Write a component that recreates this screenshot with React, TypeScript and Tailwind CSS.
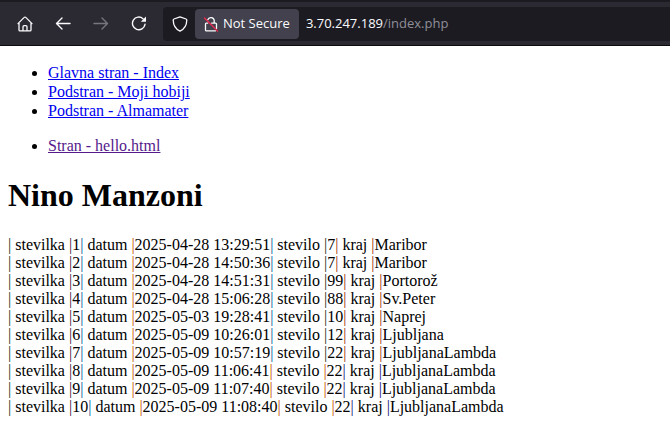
import React from "react";

type Reading = [id: number, date: string, count: number, place: string];

const readings: Reading[] = [
  [1, "2025-04-28 13:29:51", 7, "Maribor"],
  [2, "2025-04-28 14:50:36", 7, "Maribor"],
  [3, "2025-04-28 14:51:31", 99, "Portorož"],
  [4, "2025-04-28 15:06:28", 88, "Sv.Peter"],
  [5, "2025-05-03 19:28:41", 10, "Naprej"],
  [6, "2025-05-09 10:26:01", 12, "Ljubljana"],
  [7, "2025-05-09 10:57:19", 22, "LjubljanaLambda"],
  [8, "2025-05-09 11:06:41", 22, "LjubljanaLambda"],
  [9, "2025-05-09 11:07:40", 22, "LjubljanaLambda"],
  [10, "2025-05-09 11:08:40", 22, "LjubljanaLambda"],
];

function Toolbar() {
  return (
    <header className="flex h-[46px] items-center border-t-2 border-b border-t-[#1c1b22] border-b-[#0c0c0d] bg-[#2b2a33] font-['Open_Sans','Noto_Sans',sans-serif] text-[13px] text-[#fbfbfe]">
      <nav aria-label="Browser" className="flex shrink-0 gap-[22px] pr-4 pl-[17px]">
        <button aria-label="Home" className="size-4">
          <svg viewBox="0 0 16 16" className="size-4" fill="none" stroke="currentColor" strokeWidth="1.3" strokeLinejoin="round" strokeLinecap="round">
            <path d="M1 7.6 7.2 1.4a1.1 1.1 0 0 1 1.6 0L15 7.6M2 6.8v7.1c0 .6.4 1 1 1h10c.6 0 1-.4 1-1V6.8M6 14.7v-4c0-.7.4-1.1 1.1-1.1h1.8c.7 0 1.1.4 1.1 1.1v4" />
          </svg>
        </button>
        <button aria-label="Back" className="size-4">
          <svg viewBox="0 0 16 16" className="size-4" fill="none" stroke="currentColor" strokeWidth="1.4" strokeLinecap="round" strokeLinejoin="round">
            <path d="M15 7.500H2M7 2 1.500 7.500 7 13" />
          </svg>
        </button>
        <button aria-label="Forward" disabled className="size-4 text-[#77767e]">
          <svg viewBox="0 0 16 16" className="size-4" fill="none" stroke="currentColor" strokeWidth="1.4" strokeLinecap="round" strokeLinejoin="round">
            <path d="M1 7.500h13M9 2 14.500 7.500 9 13" />
          </svg>
        </button>
        <button aria-label="Reload" className="size-4">
          <svg viewBox="0 0 16 16" className="size-4" fill="none" stroke="currentColor" strokeWidth="1.4" strokeLinecap="round">
            <path d="M12 2.700A6.300 6.300 0 1 0 14 8.300" />
            <path d="M15 .6v5.200H9.800z" fill="currentColor" stroke="none" />
          </svg>
        </button>
      </nav>
      <div className="flex h-[34px] min-w-0 flex-1 items-center rounded-l bg-[#1c1b22] pl-[9px]">
        <button aria-label="Tracking protection" className="size-4 shrink-0">
          <svg viewBox="0 0 16 16" className="size-4" fill="none" stroke="currentColor" strokeWidth="1.3" strokeLinejoin="round">
            <path d="M8 .9 14 3c.5.2.8.5.8 1.1C14.7 9.3 12.5 13.2 8 15.2 3.5 13.2 1.3 9.3 1.2 4.1 1.2 3.5 1.5 3.2 2 3z" />
          </svg>
        </button>
        <button className="ml-[7px] flex h-[30px] shrink-0 items-center gap-1 rounded bg-[#42414d] pr-[9px] pl-2">
          <svg viewBox="0 0 16 16" className="size-4" fill="none" stroke="currentColor" strokeWidth="1.3" strokeLinecap="round" strokeLinejoin="round" aria-hidden="true">
            <path d="M4.800 3.800A3.300 3.300 0 0 1 11.200 4.500V7M2.500 8.200v5.700c0 .6.3.9.9.9h9.200M13.500 12.500V8c0-.6-.3-.9-.9-.9H8.500M4.700 7.100H3.400c-.6 0-.9.3-.9.9" />
            <path d="M1.500 2 14.500 15" stroke="#e22850" strokeWidth="1.5" />
          </svg>
          <span className="whitespace-nowrap">Not Secure</span>
        </button>
        <div aria-label="Address" className="ml-[7px] whitespace-nowrap">
          3.70.247.189<span className="text-[#8f8f98]">/index.php</span>
        </div>
      </div>
    </header>
  );
}

function PageLink({ children, visited = false }: { children: string; visited?: boolean }) {
  return (
    <li className="leading-[19px]">
      <a href="#" className={visited ? "text-[#551a8b] underline" : "text-[#0000ee] underline"}>
        {children}
      </a>
    </li>
  );
}

export default function App() {
  return (
    <div className="min-h-screen bg-white text-black">
      <Toolbar />
      <main className="px-2 pt-[17px] font-['Liberation_Serif',serif] text-base">
        <ul className="mb-4 list-disc pl-10">
          <PageLink>Glavna stran - Index</PageLink>
          <PageLink>Podstran - Moji hobiji</PageLink>
          <PageLink>Podstran - Almamater</PageLink>
        </ul>
        <ul className="list-disc pl-10">
          <PageLink visited>Stran - hello.html</PageLink>
        </ul>
        <h1 className="mt-[22px] mb-[23px] text-[32px] leading-9 font-bold">Nino Manzoni</h1>
        <div className="leading-[18px] whitespace-nowrap">
          {readings.map(([id, date, count, place]) => (
            <p key={id}>
              <span className="text-[#0c3418]">|</span> stevilka <span className="text-[#3c0c38]">|</span>
              {id}
              <span className="text-[#005890]">|</span> datum <span className="text-[#c85000]">|</span>
              {date}
              <span className={id > 7 ? "text-[#c85000]" : "text-[#005890]"}>|</span> stevilo{" "}
              <span className={id > 7 ? "text-[#c85000]" : "text-[#262c10]"}>|</span>
              {count}
              <span className={id > 7 ? "text-[#140c70]" : "text-[#a03000]"}>|</span> kraj{" "}
              <span className={id > 7 ? "text-[#140c70]" : "text-[#a03000]"}>|</span>
              {place}
            </p>
          ))}
        </div>
      </main>
    </div>
  );
}
